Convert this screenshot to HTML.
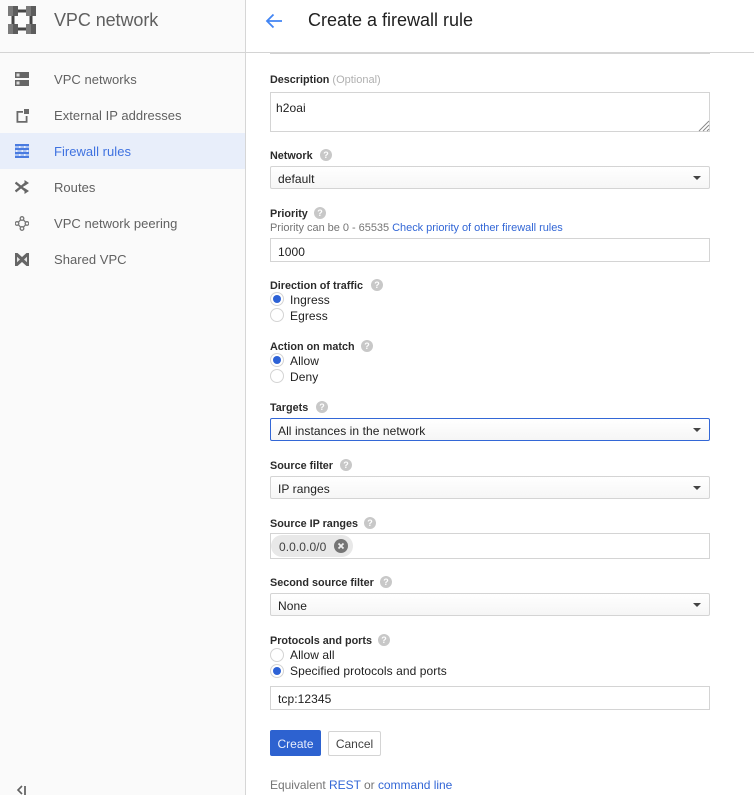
<!DOCTYPE html>
<html><head><meta charset="utf-8"><style>
html,body{margin:0;padding:0;width:754px;height:795px;overflow:hidden;background:#fff}
body{position:relative;font-family:"Liberation Sans",sans-serif;color:#212121}
.t{position:absolute;white-space:nowrap;font-size:12px;line-height:14px}
.lb{color:#2b2b2b;font-weight:bold;font-size:10.8px;letter-spacing:0}
.nav{position:absolute;left:54px;font-size:13px;line-height:16px;color:#616161;white-space:nowrap;letter-spacing:.03px}
.box{position:absolute;left:270px;width:438px;border:1px solid #d4d4d4;background:#fff;box-sizing:content-box}
.sel{height:21px;border-radius:2px;background:linear-gradient(#fff,#f6f6f6);border-color:#d4d4d4}
.arr{position:absolute;left:693px;width:0;height:0;border-left:4px solid transparent;border-right:4px solid transparent;border-top:4px solid #444}
.q{position:absolute;width:12px;height:12px;border-radius:50%;background:#c8c8c8;color:#fff;font-size:9px;line-height:12px;text-align:center;font-weight:bold}
.r{position:absolute;left:270px;width:12px;height:12px;border:1px solid #d4d4d4;border-radius:50%;background:#fff}
.r.on::after{content:"";position:absolute;left:2px;top:2px;width:8px;height:8px;border-radius:50%;background:#2d62d6}
.v{font-size:12px;letter-spacing:.07px;color:#212121}
a{color:#3367d6;text-decoration:none}
svg{position:absolute}
</style></head><body>
<div style="position:absolute;left:0;top:0;width:245px;height:795px;background:#fafafa;border-right:1px solid #d6d6d6"></div>
<div style="position:absolute;left:0;top:52px;width:754px;height:1px;background:#d4d4d4"></div>
<div style="position:absolute;left:0;top:133px;width:245px;height:36px;background:#e8eefa"></div>

<svg style="left:8px;top:6px" width="28" height="28" viewBox="0 0 28 28"><g fill="#444"><rect x="4" y="3.500" width="20" height="3"/><rect x="4" y="21.500" width="20" height="3"/><rect x="3.500" y="4" width="3" height="20"/><rect x="21.500" y="4" width="3" height="20"/></g><g fill="#7a7a7a"><rect width="5" height="10"/><rect x="18" width="5" height="10"/><rect y="18" width="5" height="10"/><rect x="18" y="18" width="5" height="10"/></g><g fill="#5c5c5c"><rect x="5" width="5" height="10"/><rect x="23" width="5" height="10"/><rect x="5" y="18" width="5" height="10"/><rect x="23" y="18" width="5" height="10"/></g></svg>
<div class="t" style="left:54px;top:10px;font-size:18px;line-height:20px;color:#5f5f5f;letter-spacing:-.08px">VPC network</div>

<svg style="left:15px;top:72px" width="14" height="14" viewBox="0 0 14 14"><path fill="#666" d="M0 0h14v6H0zM0 8h14v6H0z"/><path fill="#ddd" d="M1.500 1.500h3v3h-3zM1.500 9.500h3v3h-3z"/></svg>
<div class="nav" style="top:72px">VPC networks</div>
<svg style="left:16px;top:109px" width="13" height="14" viewBox="0 0 13 14"><path fill="none" stroke="#6a6a6a" stroke-width="1.800" d="M7 2.900H1.400v10h9.200V7"/><rect x="8" y="0" width="5" height="5" fill="#6a6a6a"/></svg>
<div class="nav" style="top:108px">External IP addresses</div>
<svg style="left:15px;top:144px" width="14" height="14" viewBox="0 0 14 14"><rect width="14" height="14" fill="#a9c2f2"/><g fill="#4a7be0"><rect width="14" height="2"/><rect y="4" width="14" height="2"/><rect y="8" width="14" height="2"/><rect y="12" width="14" height="2"/></g><g fill="#e8eefa"><rect x="4" y="2" width="1.500" height="2"/><rect x="9" y="2" width="1.500" height="2"/><rect x="1" y="6" width="1.500" height="2"/><rect x="6.500" y="6" width="1.500" height="2"/><rect x="11.500" y="6" width="1.500" height="2"/><rect x="4" y="10" width="1.500" height="2"/><rect x="9" y="10" width="1.500" height="2"/></g></svg>
<div class="nav" style="top:144px;color:#3f72e0">Firewall rules</div>
<svg style="left:15px;top:180px" width="14" height="14" viewBox="0 0 14 14"><path fill="none" stroke="#666" stroke-width="2.400" d="M.5 2.500L11 11M.5 11.500L11 3"/><path fill="#666" d="M9.500 0L14 3 9.500 6zM9.500 8L14 11l-4.500 3z"/></svg>
<div class="nav" style="top:180px">Routes</div>
<svg style="left:15px;top:216px" width="14" height="15" viewBox="0 0 14 15"><g fill="#fafafa" stroke="#777" stroke-width="1.300"><path d="M7 2.500L2 7.500l5 5 5-5z" fill="none"/><circle cx="7" cy="2.500" r="1.800"/><circle cx="2" cy="7.500" r="1.800"/><circle cx="12" cy="7.500" r="1.800"/><circle cx="7" cy="12.500" r="1.800"/></g></svg>
<div class="nav" style="top:252px">Shared VPC</div>
<div class="nav" style="top:216px">VPC network peering</div>
<svg style="left:15px;top:253px" width="14" height="13" viewBox="0 0 14 13"><path fill="#666" d="M0 0h2.500L7 4l4.500-4H14v13h-2.500L7 9l-4.500 4H0z"/><path fill="#e4e4e4" d="M2 3.800v5.400L5 6.500zM12 3.800v5.400L9 6.500z"/></svg>
<svg style="left:16px;top:785px" width="12" height="10" viewBox="0 0 12 10"><path fill="none" stroke="#616161" stroke-width="1.600" d="M6 1L2 5l4 4"/><rect x="8" y="1" width="2" height="9" fill="#757575"/></svg>

<svg style="left:265px;top:13px" width="18" height="16" viewBox="0 0 18 16"><path fill="none" stroke="#4285f4" stroke-width="1.800" d="M17 8H2M8.500 1.500L2 8l6.500 6.500"/></svg>
<div class="t" style="left:308px;top:10px;font-size:18px;line-height:20px;color:#212121">Create a firewall rule</div>
<div style="position:absolute;left:270px;top:52px;width:440px;height:2px;background:#d4d4d4"></div>

<div class="t lb" style="left:270px;top:73px">Description <span style="color:#b0b0b0;font-weight:normal;font-size:11px">(Optional)</span></div>
<div class="box" style="top:92px;height:38px"><span class="t v" style="left:5px;top:8px">h2oai</span></div>
<svg style="left:698px;top:120px" width="12" height="12" viewBox="0 0 12 12"><path stroke="#888" stroke-width="1" d="M1 11L11 1M5 11l6-6M9 11l2-2"/></svg>

<div class="t lb" style="left:270px;top:149px">Network</div><div class="q" style="left:320px;top:149px">?</div>
<div class="box sel" style="top:166px"></div><div class="t v" style="left:278px;top:172px">default</div><div class="arr" style="top:176px"></div>

<div class="t lb" style="left:270px;top:207px">Priority</div><div class="q" style="left:314px;top:207px">?</div>
<div class="t" style="left:270px;top:221px;font-size:11px;color:#757575;letter-spacing:-.03px">Priority can be 0 - 65535 <a href="#">Check priority of other firewall rules</a></div>
<div class="box" style="top:238px;height:22px"></div><div class="t v" style="left:278px;top:245px">1000</div>

<div class="t lb" style="left:270px;top:279px">Direction of traffic</div><div class="q" style="left:371px;top:279px">?</div>
<div class="r on" style="top:292px"></div><div class="t v" style="left:290px;top:293px">Ingress</div>
<div class="r" style="top:308px"></div><div class="t v" style="left:290px;top:309px">Egress</div>

<div class="t lb" style="left:270px;top:340px">Action on match</div><div class="q" style="left:361px;top:340px">?</div>
<div class="r on" style="top:353px"></div><div class="t v" style="left:290px;top:354px">Allow</div>
<div class="r" style="top:369px"></div><div class="t v" style="left:290px;top:370px">Deny</div>

<div class="t lb" style="left:270px;top:401px">Targets</div><div class="q" style="left:316px;top:401px">?</div>
<div class="box sel" style="top:418px;border-color:#3367d6"></div><div class="t v" style="left:278px;top:424px">All instances in the network</div><div class="arr" style="top:428px"></div>

<div class="t lb" style="left:270px;top:459px">Source filter</div><div class="q" style="left:340px;top:459px">?</div>
<div class="box sel" style="top:476px"></div><div class="t v" style="left:278px;top:482px">IP ranges</div><div class="arr" style="top:486px"></div>

<div class="t lb" style="left:270px;top:517px">Source IP ranges</div><div class="q" style="left:364px;top:517px">?</div>
<div class="box" style="top:533px;height:24px"></div>
<div style="position:absolute;left:271px;top:535px;width:82px;height:22px;border-radius:11px;background:#e8e8e8"></div>
<div class="t v" style="left:279px;top:540px;color:#424242">0.0.0.0/0</div>
<svg style="left:334px;top:539px" width="14" height="14" viewBox="0 0 14 14"><circle cx="7" cy="7" r="7" fill="#757575"/><path stroke="#eee" stroke-width="1.800" d="M4.500 4.500l5 5M9.500 4.500l-5 5"/></svg>

<div class="t lb" style="left:270px;top:576px">Second source filter</div><div class="q" style="left:380px;top:576px">?</div>
<div class="box sel" style="top:593px"></div><div class="t v" style="left:278px;top:599px">None</div><div class="arr" style="top:603px"></div>

<div class="t lb" style="left:270px;top:634px">Protocols and ports</div><div class="q" style="left:378px;top:634px">?</div>
<div class="r" style="top:648px"></div><div class="t v" style="left:290px;top:648px">Allow all</div>
<div class="r on" style="top:664px"></div><div class="t v" style="left:290px;top:664px">Specified protocols and ports</div>
<div class="box" style="top:686px;height:22px"></div><div class="t v" style="left:278px;top:692px">tcp:12345</div>

<div style="position:absolute;left:270px;top:730px;width:51px;height:26px;background:#2d62d0;border-radius:2px;color:#e8eefc;font-size:12px;line-height:28px;text-align:center">Create</div>
<div style="position:absolute;left:328px;top:731px;width:51px;height:23px;border:1px solid #d4d4d4;border-radius:2px;background:#fff;color:#424242;font-size:12px;line-height:25px;text-align:center">Cancel</div>
<div class="t" style="left:270px;top:778px;font-size:12px;color:#757575;letter-spacing:-.03px">Equivalent <a href="#">REST</a> or <a href="#">command line</a></div>
</body></html>
